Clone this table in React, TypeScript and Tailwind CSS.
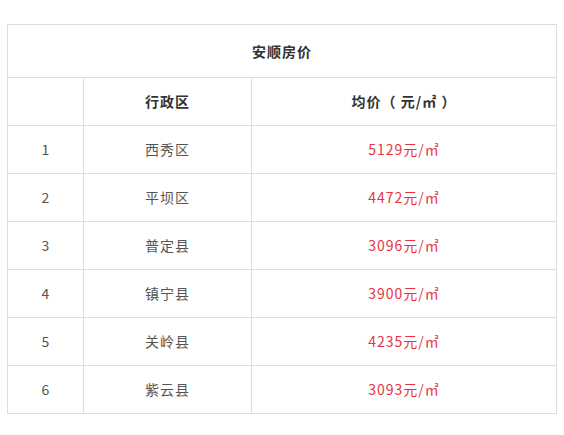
import React from "react";

const rows = [
  { id: 1, name: "西秀区", price: "5129" },
  { id: 2, name: "平坝区", price: "4472" },
  { id: 3, name: "普定县", price: "3096" },
  { id: 4, name: "镇宁县", price: "3900" },
  { id: 5, name: "关岭县", price: "4235" },
  { id: 6, name: "紫云县", price: "3093" },
];

const App = () => {
  return (
    <div className="w-[564px] h-[435px] bg-white pt-[24px] pl-[7px] font-['Noto_Sans_CJK_SC','Noto_Sans',sans-serif] text-[14px]">
      <table className="w-[550px] border-collapse table-fixed">
        <colgroup>
          <col className="w-[76px]" />
          <col className="w-[168px]" />
          <col />
        </colgroup>
        <tbody>
          <tr className="h-[53px]">
            <td colSpan={3} className="border border-[#dddddd] text-center font-bold text-[#333333] tracking-[1px]">
              安顺房价
            </td>
          </tr>
          <tr className="h-[48px]">
            <td className="border border-[#dddddd]"></td>
            <td className="border border-[#dddddd] text-center font-bold text-[#333333] tracking-[1px]">行政区</td>
            <td className="border border-[#dddddd] text-center font-bold text-[#333333] tracking-[1px]">均价（ 元/㎡ ）</td>
          </tr>
          {rows.map((item) => (
            <tr className="h-[48px]" key={item.id}>
              <td className="border border-[#dddddd] text-center text-[#555555]">{item.id}</td>
              <td className="border border-[#dddddd] text-center text-[#555555] tracking-[1px]">{item.name}</td>
              <td className="border border-[#dddddd] text-center text-[#e8333d] tracking-[1px]">
                {item.price}元/㎡
              </td>
            </tr>
          ))}
        </tbody>
      </table>
    </div>
  );
};

export default App;
